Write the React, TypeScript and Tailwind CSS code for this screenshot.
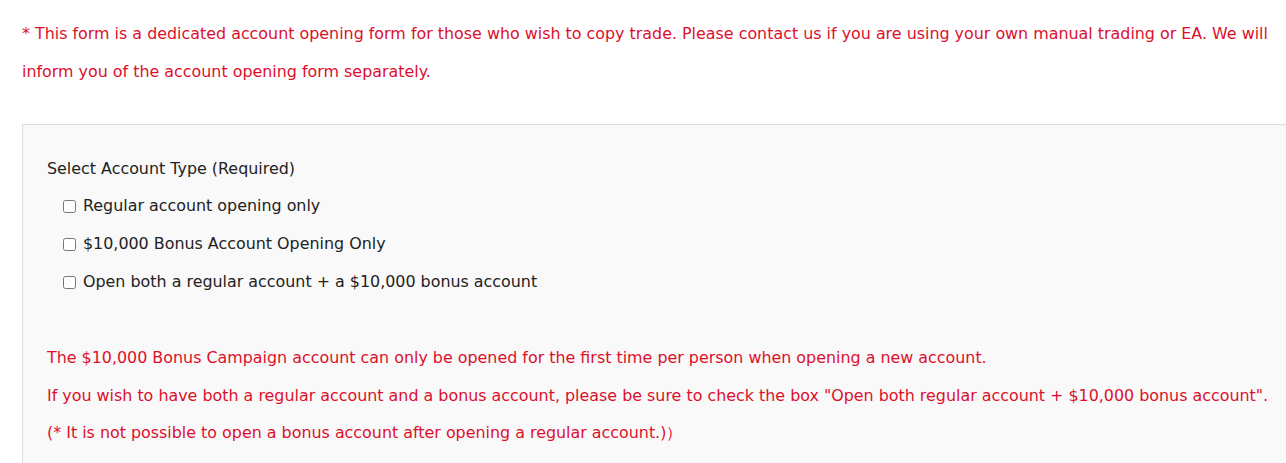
import React from "react";

export default function App() {
  const font = { fontFamily: '"DejaVu Sans", Verdana, sans-serif' };
  return (
    <div className="bg-white w-[1286px] h-[463px] overflow-hidden text-[15.9px]" style={font}>
      <div className="pl-[22px] pt-[15px]">
        <p className="text-[#dc102c] leading-[38px] w-[1264px]">
          * This form is a dedicated account opening form for those who wish to copy trade. Please contact us if you are using your own manual trading or EA. We will inform you of the account opening form separately.
        </p>
        <div className="mt-[33px] border-t border-l border-[#dddddd] bg-[#f9f9f9] w-[1300px] pl-[24px] pt-[32px] pb-[20px]">
          <p className="text-[#222] leading-[24px]">Select Account Type (Required)</p>
          <div className="pl-[16px] mt-[6px]">
            {[
              "Regular account opening only",
              "$10,000 Bonus Account Opening Only",
              "Open both a regular account + a $10,000 bonus account",
            ].map((t) => (
              <label key={t} className="flex items-center h-[38px] text-[#222]">
                <input type="checkbox" className="w-[13px] h-[13px] mr-[7px] accent-gray-500" />
                <span>{t}</span>
              </label>
            ))}
          </div>
          <div className="mt-[38px] text-[#dc102c] leading-[37.5px]">
            <p>The $10,000 Bonus Campaign account can only be opened for the first time per person when opening a new account.</p>
            <p>If you wish to have both a regular account and a bonus account, please be sure to check the box "Open both regular account + $10,000 bonus account".</p>
            <p>(* It is not possible to open a bonus account after opening a regular account.)）</p>
          </div>
        </div>
      </div>
    </div>
  );
}
